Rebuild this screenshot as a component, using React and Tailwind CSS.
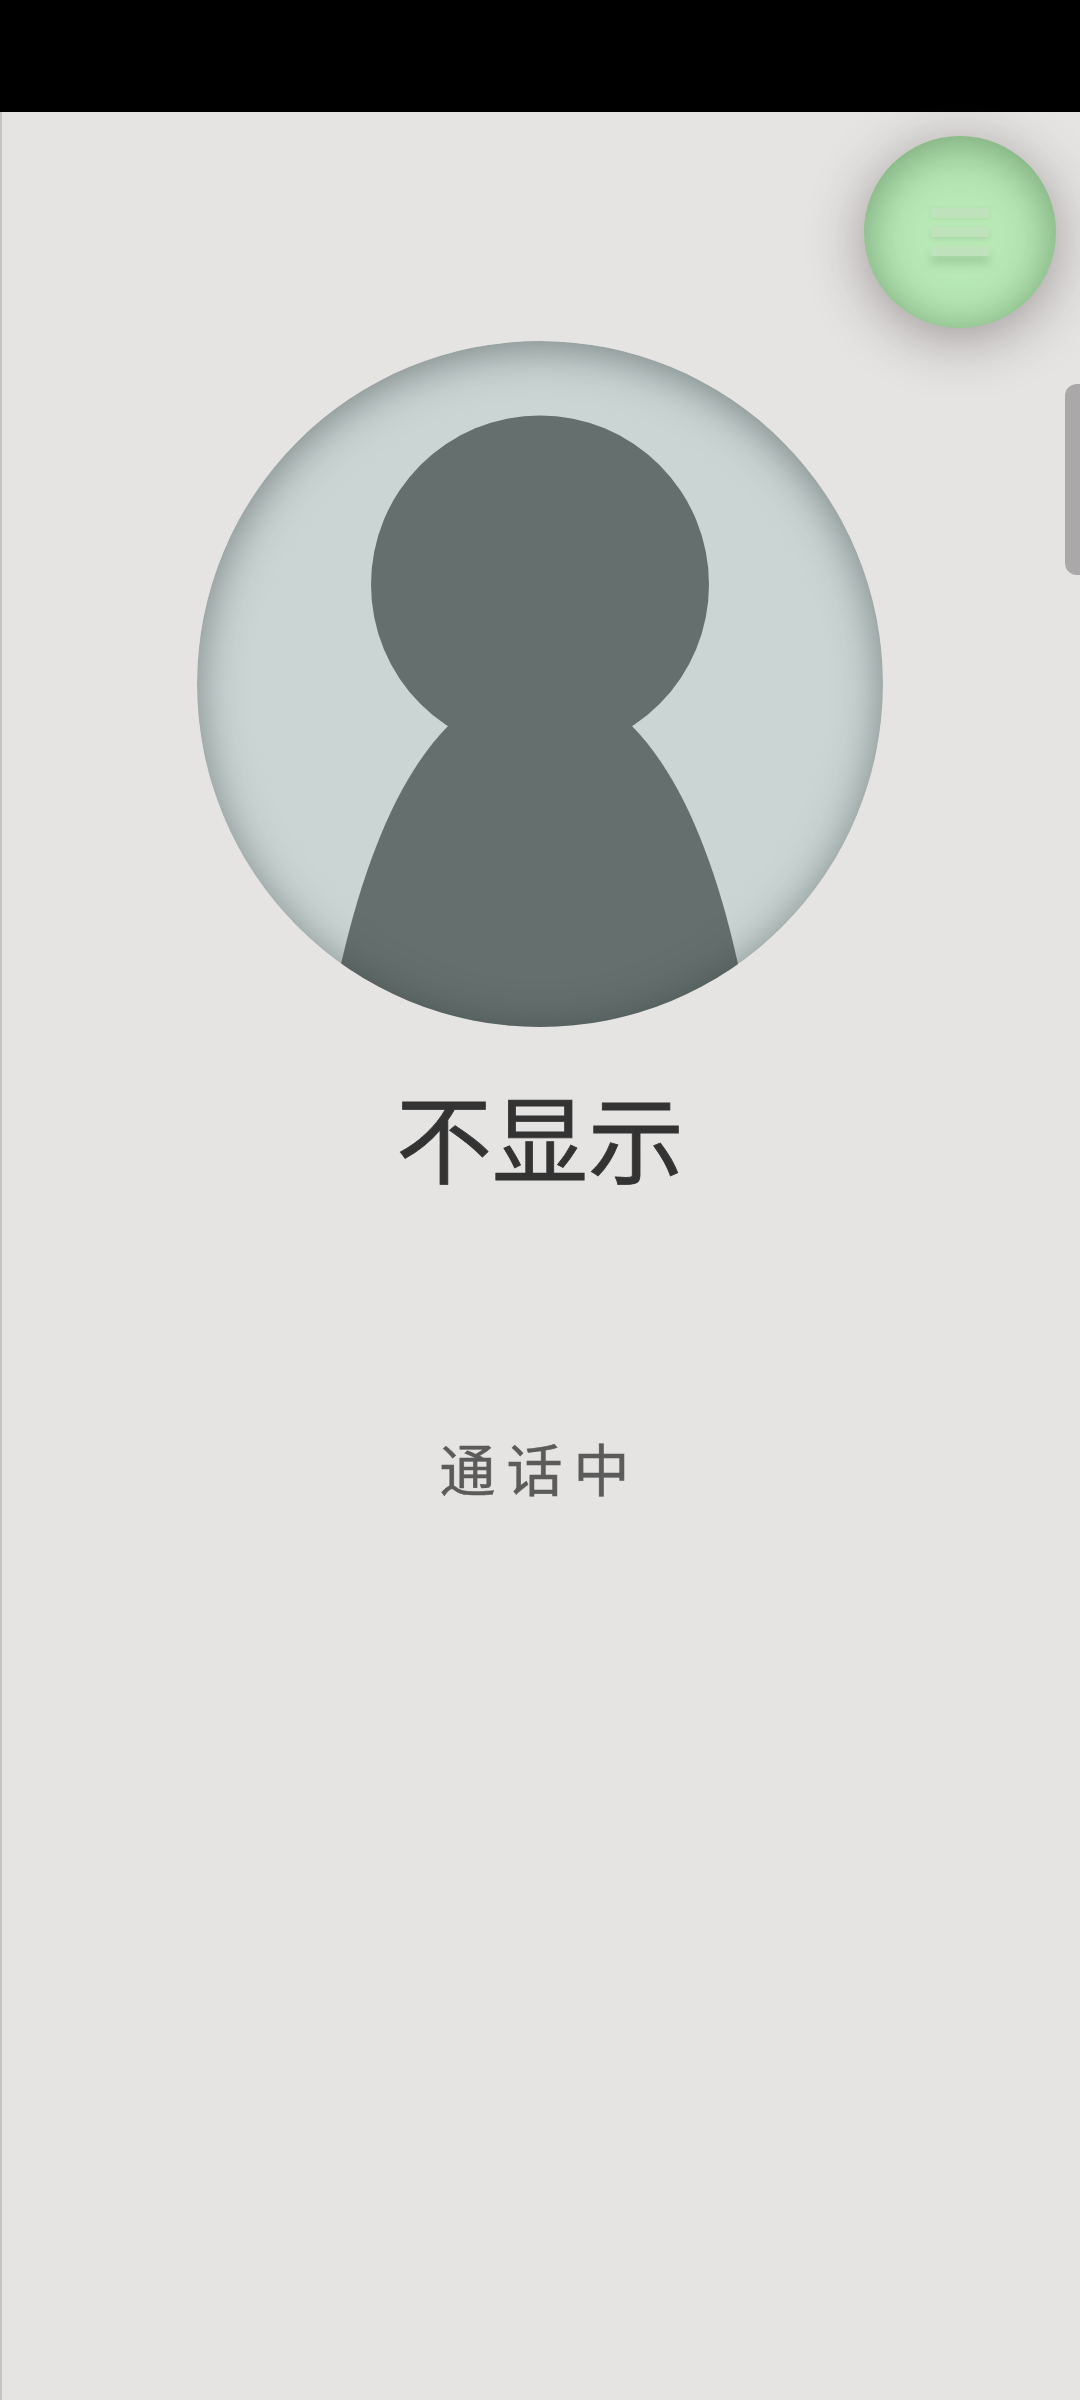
export default function App() {
  return (
    <div className="w-[1080px] h-[2400px] flex flex-col bg-[#e5e4e2] font-['Noto_Sans_CJK_SC','Noto_Sans',sans-serif] overflow-hidden">
      <div className="h-[112px] bg-black shrink-0" />

      <div className="relative flex-1 flex flex-col items-center border-l-2 border-[#c4c4c2]">
        {/* avatar */}
        <div className="relative w-[686px] h-[686px] mt-[229px] -ml-[2px] rounded-full overflow-hidden bg-[#cad5d4]">
          <svg viewBox="0 0 686 686" className="w-full h-full block">
            <circle cx="343" cy="243.5" r="169" fill="#65706e" />
            <path d="M252 384C206 430 170 510 144 623L130 700L556 700L541 623C516 510 480 430 434 384Z" fill="#65706e" />
          </svg>
          <div className="absolute inset-0 rounded-full shadow-[inset_0_6px_44px_rgba(40,50,50,0.5)]" />
        </div>

        <div className="mt-[38px] -ml-[2px] text-[96px] leading-[139px] text-[#333333] [-webkit-text-stroke:0.8px_#333333]">不显示</div>
        <div className="mt-[222px] -ml-[2px] text-[56px] leading-[81px] tracking-[11px] text-[#5b5b5b] [-webkit-text-stroke:0.5px_#5b5b5b]">通话中</div>

        {/* floating menu button */}
        <div className="absolute top-[24px] left-[862px] w-[192px] h-[192px] rounded-full bg-[#b8e9b6] flex flex-col items-center justify-center gap-[9px] shadow-[0_10px_56px_rgba(60,45,50,0.42),inset_0_6px_48px_rgba(60,100,60,0.55)]">
          <div className="w-[58px] h-[10px] rounded-[2px] bg-[#bfe2bc] blur-[0.5px] shadow-[0_1px_4px_rgba(90,140,90,0.15)]" />
          <div className="w-[58px] h-[10px] rounded-[2px] bg-[#bfe2bc] blur-[0.5px] shadow-[0_2px_5px_rgba(90,140,90,0.2)]" />
          <div className="w-[58px] h-[10px] rounded-[2px] bg-[#bfe2bc] blur-[0.5px] shadow-[0_8px_10px_rgba(90,140,90,0.3)]" />
        </div>

        {/* side handle */}
        <div className="absolute top-[272px] right-0 w-[15px] h-[191px] rounded-l-[12px] bg-[#aaa8a8]" />
      </div>
    </div>
  )
}
